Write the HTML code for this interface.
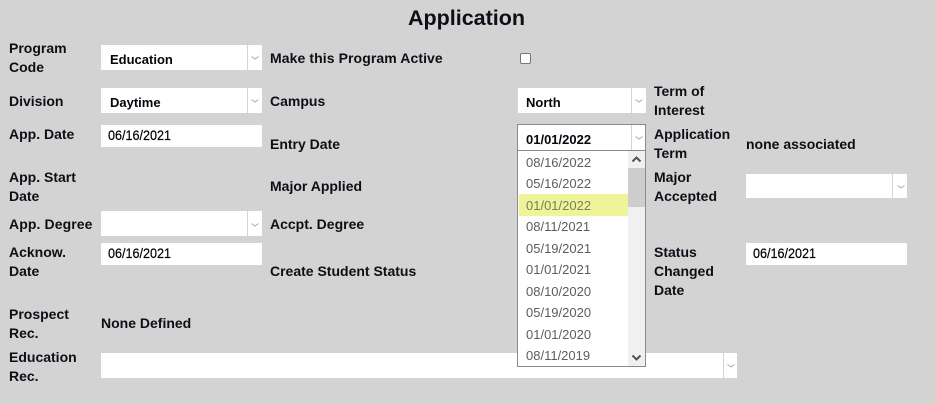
<!DOCTYPE html>
<html><head><meta charset="utf-8"><style>
html,body{margin:0;padding:0;background:#d3d3d3;}
body{width:936px;height:404px;overflow:hidden;position:relative;font-family:"Liberation Sans",sans-serif;color:#111;}
.l{position:absolute;font-size:14px;font-weight:bold;line-height:19px;white-space:nowrap;color:#0e0e16;}
.b{position:absolute;background:#fff;}
.s{position:absolute;font-size:13px;font-weight:bold;color:#05050c;line-height:16px;white-space:nowrap;}
.d{position:absolute;font-size:14px;font-weight:normal;color:#000;-webkit-text-stroke:.2px #000;line-height:16px;white-space:nowrap;transform:scaleX(.9);transform-origin:0 0;}
.o{position:absolute;left:526px;font-size:13px;color:#5c5c64;line-height:16px;white-space:nowrap;}
svg{position:absolute;}
</style></head><body>
<div style="position:absolute;left:0;top:6px;width:933px;text-align:center;font-size:21.5px;font-weight:bold;line-height:24px;color:#0e0e16;">Application</div>

<div class="l" style="left:9px;top:39px">Program</div>
<div class="l" style="left:9px;top:58px">Code</div>
<div class="l" style="left:9px;top:92px">Division</div>
<div class="l" style="left:9px;top:125px">App. Date</div>
<div class="l" style="left:9px;top:168px">App. Start</div>
<div class="l" style="left:9px;top:187px">Date</div>
<div class="l" style="left:9px;top:215px;letter-spacing:.1px">App. Degree</div>
<div class="l" style="left:9px;top:243px">Acknow.</div>
<div class="l" style="left:9px;top:262px">Date</div>
<div class="l" style="left:9px;top:305px">Prospect</div>
<div class="l" style="left:9px;top:324px">Rec.</div>
<div class="l" style="left:9px;top:348px">Education</div>
<div class="l" style="left:9px;top:367px">Rec.</div>

<div class="l" style="left:270px;top:49px;letter-spacing:.09px">Make this Program Active</div>
<div class="l" style="left:270px;top:92px">Campus</div>
<div class="l" style="left:270px;top:135px">Entry Date</div>
<div class="l" style="left:270px;top:177px">Major Applied</div>
<div class="l" style="left:270px;top:215px">Accpt. Degree</div>
<div class="l" style="left:270px;top:262px">Create Student Status</div>

<div class="l" style="left:654px;top:82px">Term of</div>
<div class="l" style="left:654px;top:101px">Interest</div>
<div class="l" style="left:654px;top:125px">Application</div>
<div class="l" style="left:654px;top:144px">Term</div>
<div class="l" style="left:654px;top:168px">Major</div>
<div class="l" style="left:654px;top:187px">Accepted</div>
<div class="l" style="left:654px;top:243px">Status</div>
<div class="l" style="left:654px;top:262px">Changed</div>
<div class="l" style="left:654px;top:281px">Date</div>
<div class="l" style="left:746px;top:135px">none associated</div>
<div class="l" style="left:101px;top:314px">None Defined</div>

<!-- selects -->
<div class="b" style="left:101px;top:45px;width:146px;height:25px"></div><div class="b" style="left:248px;top:45px;width:14px;height:25px"></div>
<div class="s" style="left:110px;top:52px">Education</div>
<svg style="left:250px;top:55px" width="10" height="6"><path d="M1.5 1.5L5 4L8.5 1.5" fill="none" stroke="#aaa" stroke-width="1"/></svg>

<div class="b" style="left:101px;top:88px;width:146px;height:25px"></div><div class="b" style="left:248px;top:88px;width:14px;height:25px"></div>
<div class="s" style="left:110px;top:95px">Daytime</div>
<svg style="left:250px;top:98px" width="10" height="6"><path d="M1.5 1.5L5 4L8.5 1.5" fill="none" stroke="#aaa" stroke-width="1"/></svg>

<div class="b" style="left:101px;top:125px;width:161px;height:22px"></div>
<div class="d" style="left:108px;top:127px">06/16/2021</div>

<div class="b" style="left:101px;top:211px;width:146px;height:25px"></div><div class="b" style="left:248px;top:211px;width:14px;height:25px"></div>
<svg style="left:250px;top:222px" width="10" height="6"><path d="M1.5 1.5L5 4L8.5 1.5" fill="none" stroke="#aaa" stroke-width="1"/></svg>

<div class="b" style="left:101px;top:243px;width:161px;height:22px"></div>
<div class="d" style="left:108px;top:245px">06/16/2021</div>

<div class="b" style="left:101px;top:353px;width:622px;height:25px"></div><div class="b" style="left:724px;top:353px;width:13px;height:25px"></div>
<svg style="left:726px;top:363px" width="10" height="6"><path d="M1.5 1.5L5 4L8.5 1.5" fill="none" stroke="#aaa" stroke-width="1"/></svg>

<!-- checkbox -->
<div style="position:absolute;left:520px;top:53px;width:9px;height:9px;background:#fff;border:1px solid #767676;border-radius:2px"></div>

<!-- North -->
<div class="b" style="left:518px;top:88px;width:113px;height:25px"></div><div class="b" style="left:632px;top:88px;width:14px;height:25px"></div>
<div class="s" style="left:526px;top:95px">North</div>
<svg style="left:634px;top:98px" width="10" height="6"><path d="M1.5 1.5L5 4L8.5 1.5" fill="none" stroke="#aaa" stroke-width="1"/></svg>

<!-- right column controls -->
<div class="b" style="left:746px;top:174px;width:146px;height:24px"></div><div class="b" style="left:893px;top:174px;width:14px;height:24px"></div>
<svg style="left:896px;top:184px" width="10" height="6"><path d="M1.5 1.5L5 4L8.5 1.5" fill="none" stroke="#aaa" stroke-width="1"/></svg>
<div class="b" style="left:746px;top:243px;width:161px;height:22px"></div>
<div class="d" style="left:753px;top:245px">06/16/2021</div>

<!-- open dropdown -->
<div style="position:absolute;left:517px;top:124px;width:127px;height:25px;background:#fff;border:1px solid #8a8a8a"></div>
<div style="position:absolute;left:631px;top:125px;width:1px;height:25px;background:#d3d3d3"></div>
<div class="s" style="left:526px;top:132px">01/01/2022</div>
<svg style="left:634px;top:135px" width="10" height="6"><path d="M1.5 1.5L5 4L8.5 1.5" fill="none" stroke="#aaa" stroke-width="1"/></svg>

<div style="position:absolute;left:517px;top:151px;width:127px;height:215px;background:#fff;border:1px solid #8a8a8a;border-top:0"></div>
<div style="position:absolute;left:519px;top:194px;width:109px;height:22px;background:#eef497"></div>
<div class="o" style="top:155px">08/16/2022</div>
<div class="o" style="top:176px">05/16/2022</div>
<div class="o" style="top:198px;color:#7c7c60">01/01/2022</div>
<div class="o" style="top:219px">08/11/2021</div>
<div class="o" style="top:241px">05/19/2021</div>
<div class="o" style="top:262px">01/01/2021</div>
<div class="o" style="top:284px">08/10/2020</div>
<div class="o" style="top:305px">05/19/2020</div>
<div class="o" style="top:327px">01/01/2020</div>
<div class="o" style="top:348px">08/11/2019</div>

<!-- scrollbar -->
<div style="position:absolute;left:628px;top:151px;width:17px;height:215px;background:#f0f0f0"></div>
<div style="position:absolute;left:628px;top:168px;width:17px;height:39px;background:#cdcdcd"></div>
<svg style="left:628px;top:151px" width="17" height="17"><path d="M4.5 10.5L8.5 6.5L12.5 10.5" fill="none" stroke="#505050" stroke-width="2"/></svg>
<svg style="left:628px;top:349px" width="17" height="17"><path d="M4.5 6.5L8.5 10.5L12.5 6.5" fill="none" stroke="#505050" stroke-width="2"/></svg>
</body></html>
